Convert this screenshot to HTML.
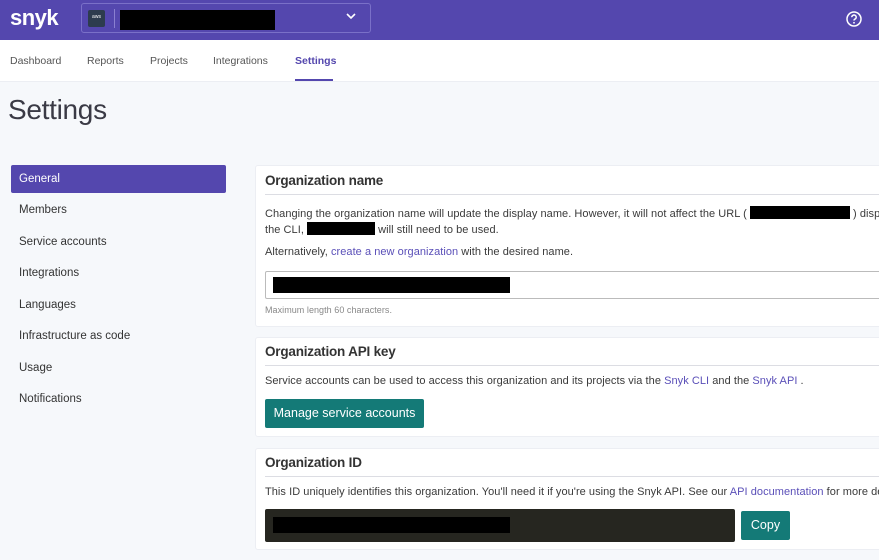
<!DOCTYPE html>
<html><head><meta charset="utf-8"><style>
*{box-sizing:border-box;margin:0;padding:0}
body{width:879px;height:560px;overflow:hidden;background:#f6f8fb;font-family:"Liberation Sans",sans-serif;color:#3b3b4f;position:relative;letter-spacing:0}
.a{position:absolute;white-space:nowrap}
.hdr{position:absolute;left:0;top:0;width:879px;height:40px;background:#5447ae}
.nav{position:absolute;left:0;top:40px;width:879px;height:42px;background:#fff;border-bottom:1px solid #eceef3}
.nav span{position:absolute;top:15px;font-size:10.5px;color:#555}
.side{font-size:11.5px;color:#333;left:19px}
.card{position:absolute;left:255px;width:640px;background:#fff;border:1px solid #eceef3;border-radius:3px;overflow:hidden}
.card h3{position:absolute;left:9px;font-size:13.5px;font-weight:bold;color:#333;letter-spacing:-0.2px}
.card .ln{position:absolute;left:9px;right:0;height:1px;background:#dcdde3}
.t{position:absolute;left:9px;font-size:11px;color:#3a3a3a;white-space:nowrap;letter-spacing:0.05px}
.ib{display:inline-block;background:#000;height:13px;vertical-align:-2px}
a{color:#5a4fb8;text-decoration:none}
.blk{position:absolute;background:#000}
</style></head><body>
<div class="hdr">
 <div class="a" style="left:10px;top:5px;font-size:22px;font-weight:bold;color:#fff;letter-spacing:-0.5px">snyk</div>
 <div class="a" style="left:81px;top:3px;width:290px;height:30px;border:1px solid #7a70c8;border-radius:3px"></div>
 <div class="a" style="left:88px;top:10px;width:17px;height:17px;background:#2d3c4e;border-radius:2px;color:#fff;font-size:5px;text-align:center;line-height:15px">aws</div>
 <div class="a" style="left:114px;top:9px;width:1px;height:19px;background:#8a80d0"></div>
 <div class="blk" style="left:120px;top:10px;width:155px;height:20px"></div>
 <svg class="a" style="left:346px;top:12px" width="10" height="8"><path d="M1 2l4 4 4-4" stroke="#fff" stroke-width="1.6" fill="none"/></svg>
 <svg class="a" style="left:845px;top:10px" width="18" height="18"><circle cx="9" cy="9" r="7" stroke="#fff" stroke-width="1.5" fill="none"/><path d="M6.8 7.2a2.2 2.2 0 1 1 3 2c-.6.3-.8.7-.8 1.3" stroke="#fff" stroke-width="1.5" fill="none"/><circle cx="9" cy="12.8" r=".9" fill="#fff"/></svg>
</div>
<div class="nav">
 <span style="left:10px">Dashboard</span><span style="left:87px">Reports</span><span style="left:150px">Projects</span><span style="left:213px">Integrations</span>
 <span style="left:295px;color:#5447ae;font-weight:bold">Settings</span>
 <div class="a" style="left:295px;top:39px;width:38px;height:2px;background:#5447ae"></div>
</div>
<div class="a" style="left:8px;top:94px;font-size:28px;color:#3a3a45;letter-spacing:-0.3px">Settings</div>
<div class="a" style="left:11px;top:165px;width:215px;height:28px;background:#5447ae;border-radius:2px"></div>
<div class="a side" style="top:173px;color:#fff">General</div>
<div class="a side" style="top:204px">Members</div>
<div class="a side" style="top:236px">Service accounts</div>
<div class="a side" style="top:267px">Integrations</div>
<div class="a side" style="top:299px">Languages</div>
<div class="a side" style="top:330px">Infrastructure as code</div>
<div class="a side" style="top:362px">Usage</div>
<div class="a side" style="top:393px">Notifications</div>

<div class="card" style="top:165px;height:162px">
 <h3 style="top:7px">Organization name</h3>
 <div class="ln" style="top:28px"></div>
 <div class="t" style="top:40px">Changing the organization name will update the display name. However, it will not affect the URL ( <span class="ib" style="width:100px"></span> ) display</div>
 <div class="t" style="top:56px">the CLI, <span class="ib" style="width:68px"></span> will still need to be used.</div>
 <div class="t" style="top:80px">Alternatively, <a>create a new organization</a> with the desired name.</div>
 <div class="a" style="left:9px;top:105px;width:640px;height:28px;border:1px solid #bbb;border-radius:2px"></div>
 <div class="blk" style="left:17px;top:111px;width:237px;height:16px"></div>
 <div class="t" style="top:139px;font-size:9px;color:#888">Maximum length 60 characters.</div>
</div>

<div class="card" style="top:337px;height:100px">
 <h3 style="top:6px">Organization API key</h3>
 <div class="ln" style="top:27px"></div>
 <div class="t" style="top:37px">Service accounts can be used to access this organization and its projects via the <a>Snyk CLI</a> and the <a>Snyk API</a> .</div>
 <div class="a" style="left:9px;top:61px;width:159px;height:29px;background:#147a77;border-radius:2px;color:#fff;font-size:12.5px;text-align:center;line-height:29px">Manage service accounts</div>
</div>

<div class="card" style="top:448px;height:102px">
 <h3 style="top:6px">Organization ID</h3>
 <div class="ln" style="top:27px"></div>
 <div class="t" style="top:37px">This ID uniquely identifies this organization. You'll need it if you're using the Snyk API. See our <a>API documentation</a> for more details.</div>
 <div class="a" style="left:9px;top:60px;width:470px;height:33px;background:#262620;border-radius:2px"></div>
 <div class="blk" style="left:17px;top:68px;width:237px;height:16px"></div>
 <div class="a" style="left:485px;top:62px;width:49px;height:29px;background:#147a77;border-radius:2px;color:#fff;font-size:12.5px;text-align:center;line-height:29px">Copy</div>
</div>
</body></html>
